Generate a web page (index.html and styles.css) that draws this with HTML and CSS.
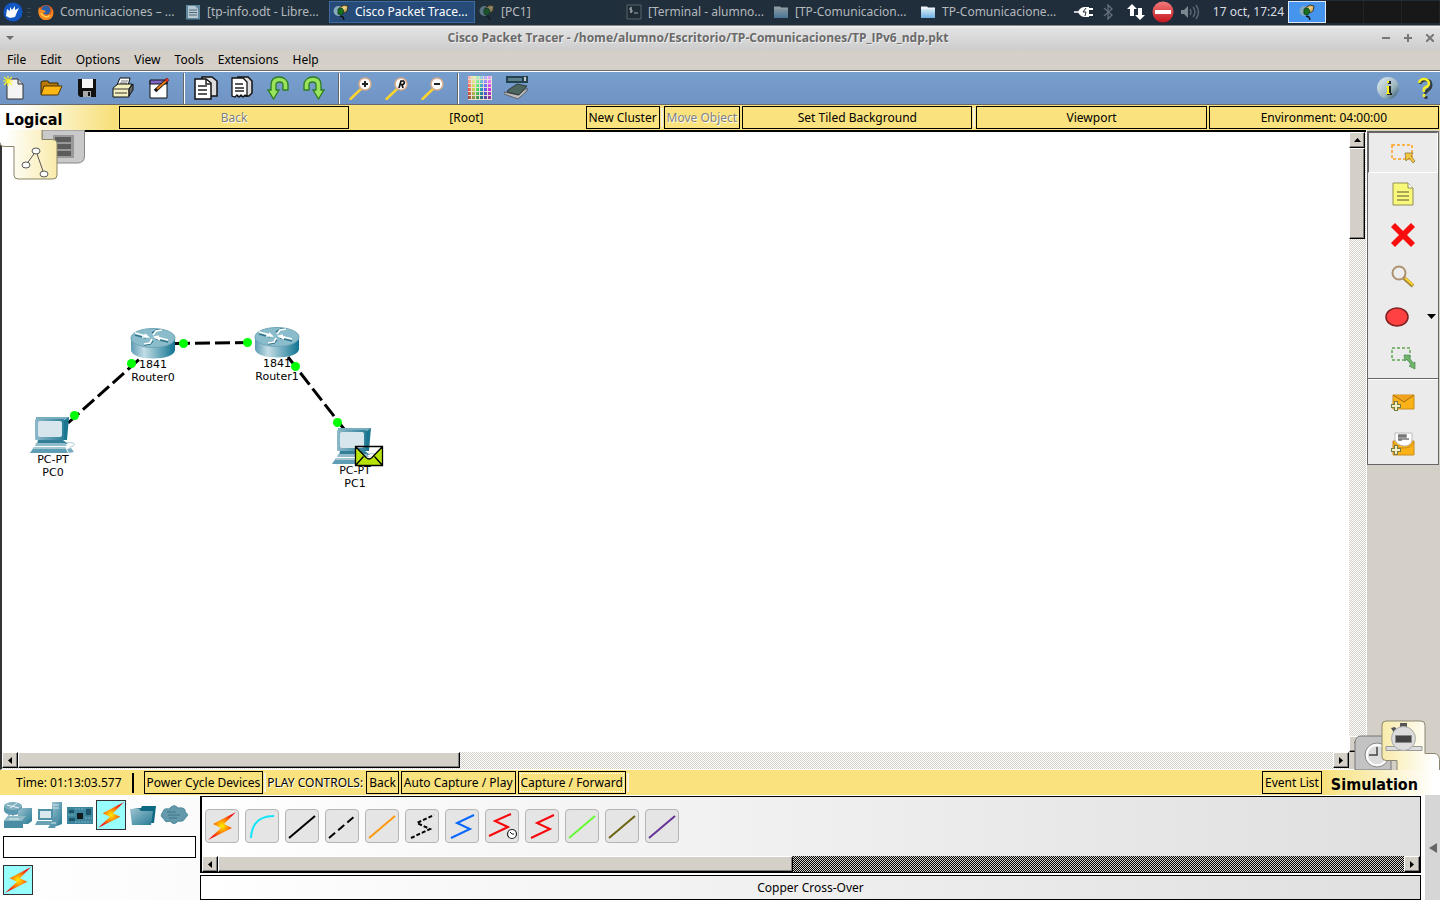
FILE: index.html
```html
<!DOCTYPE html>
<html lang="es">
<head>
<meta charset="utf-8">
<title>Cisco Packet Tracer</title>
<link rel="stylesheet" href="styles.css">
</head>
<body>
<svg class="defs" aria-hidden="true">
  <defs>
    <linearGradient id="gTeal" x1="0" x2="1" y1="0" y2="0"><stop offset="0" stop-color="#5f9cb4"/><stop offset=".3" stop-color="#c3dde6"/><stop offset="1" stop-color="#0f7391"/></linearGradient>
    <linearGradient id="gPc" x1="0" x2="1" y1="0" y2="0"><stop offset="0" stop-color="#8db9c9"/><stop offset="1" stop-color="#2c8099"/></linearGradient>
    <linearGradient id="gDev" x1="0" x2="1" y1="0" y2="1"><stop offset="0" stop-color="#9cc3d0"/><stop offset="1" stop-color="#287b95"/></linearGradient>
    <radialGradient id="gBolt"><stop offset="0" stop-color="#ffee00"/><stop offset=".45" stop-color="#ff8a00"/><stop offset="1" stop-color="#f01010"/></radialGradient>
    <linearGradient id="gRed" x1="0" x2="0" y1="0" y2="1"><stop offset="0" stop-color="#f37a7a"/><stop offset="1" stop-color="#c4161c"/></linearGradient>
    <linearGradient id="gFolder" x1="0" x2="0" y1="0" y2="1"><stop offset="0" stop-color="#d3e9f6"/><stop offset="1" stop-color="#6cafe0"/></linearGradient>
    <linearGradient id="gPale" x1="0" x2="1" y1="0" y2="0"><stop offset=".1" stop-color="#fff"/><stop offset="1" stop-color="#f9ebaa"/></linearGradient>
    <linearGradient id="gPaleR" x1="0" x2="1" y1="0" y2="0"><stop offset="0" stop-color="#f9ebaa"/><stop offset=".9" stop-color="#fff"/></linearGradient>
    <linearGradient id="gInfo" x1="0" x2="1" y1="0" y2="1"><stop offset="0" stop-color="#e6eef2"/><stop offset=".6" stop-color="#9db6c0"/><stop offset="1" stop-color="#28506a"/></linearGradient>
    <symbol id="pt" viewBox="0 0 16 16"><circle cx="5.500" cy="7" r="5" fill="#86aabb"/><path d="M7 12l3 1 1 3" fill="none" stroke="#111" stroke-width="1.500"/><path d="M6 4l5-3 4 1-1 5-3 2z" fill="#d9b566" stroke="#2b2410" stroke-width=".8"/><path d="M7 4l7-1-4 3z" fill="#f1dc9c"/><path d="M5 5l4-1 2 3-2 4-4-1z" fill="#14701f" stroke="#0b3a10" stroke-width=".8"/></symbol>
    <symbol id="folder" viewBox="0 0 16 16"><path d="M1 2.500h6l1 1h7v3H1z" fill="#eef4f8"/><path d="M1 5h14v9H1z" fill="url(#gFolder)"/></symbol>
    <symbol id="bolt" viewBox="0 0 30 30"><path d="M29 1L6 13l8 4L1 29l24-12-8-4z" fill="url(#gBolt)"/></symbol>
    <symbol id="router" viewBox="0 0 46 31"><path d="M1 10v12c0 5 10 8.500 22 8.500S45 27 45 22V10z" fill="url(#gTeal)"/><ellipse cx="23" cy="10" rx="22" ry="9.500" fill="#8bbccb" stroke="#6fa6b8"/><g fill="none" stroke="#2f7389" stroke-width="1.500"><path d="M5 7l11 3M26 11l12 3M22 5l5-3 5 0M14 17l6-1 3-3"/></g><g fill="none" stroke="#fff" stroke-width="1.700"><path d="M5 5l11 3m-1-2l3 3-6 0M26 9l12 3m-9-4l-4 1 5 3M23 7l3-4 6-1M14 16l6-1 2-4"/></g></symbol>
    <symbol id="pc" viewBox="0 0 46 38"><path d="M6 1h33l-2 23H6z" fill="#1b7790"/><path d="M6 1h33l-4 3H6z" fill="#78adbe"/><rect x="5" y="3" width="29" height="21" rx="1" fill="url(#gPc)"/><rect x="8" y="5" width="24" height="16" rx="2" fill="#d7e6ec"/><path d="M8 24h25l5 4H7z" fill="#327f98"/><path d="M6 27h29l2 3H5z" fill="#91bccb"/><path d="M4 31h31l3 6H0z" fill="#5e9db3"/><path d="M4 31h31l1 2H3z" fill="#a4c9d5"/><path d="M37 33l4-1 3 4-5 1z" fill="#79adbf"/><path d="M36 27c6-1 9 0 8 2s-5 1-4 4" fill="none" stroke="#a6c7d2"/></symbol>
    <symbol id="lens" viewBox="0 0 24 24"><path d="M1.500 23L12 13" stroke="#fbd22f" stroke-width="2.500" stroke-linecap="round"/><circle cx="16" cy="8" r="6" fill="#fafafa" stroke="#d9ac8c" stroke-width="1.500"/></symbol>
    <symbol id="uturn" viewBox="0 0 24 24"><path d="M2 14h3V9c0-5 3-8 8-8s9 3 9 8v5h-5V9c0-2-1-3-3.500-3S10 7 10 9v5h3l-5.500 9z" fill="#9be35c" stroke="#2b7d22" stroke-width="1.300"/></symbol>
  </defs>
</svg>

<header class="taskbar">
  <button class="launcher" aria-label="Menu"><svg width="20" height="20" viewBox="0 0 20 20"><circle cx="10" cy="10" r="9.500" fill="#1257c4"/><path d="M4 7l3 2 0-4 2 3 3-4 0 4 4-2-2 4-2 5-5 1-4-2z" fill="#fff"/></svg></button>
  <span class="grip"></span>
  <nav class="tasks">
    <button class="task"><svg width="16" height="16" viewBox="0 0 16 16"><circle cx="8" cy="8.500" r="7.500" fill="#e5601b"/><circle cx="8" cy="6" r="4.500" fill="#2a5fa8"/><path d="M1 3c2 3 2 3 5 3l2 2-3 1 3 3 5-1 1-6c3 6 0 11-6 11S-1 10 1 3z" fill="#f48a22"/><path d="M3 9c2 4 6 5 9 2" stroke="#ffd24a" stroke-width="1.500" fill="none"/></svg><span>Comunicaciones – ...</span></button>
    <button class="task"><svg width="16" height="16" viewBox="0 0 16 16"><path d="M1 1h14v14.500H1z" fill="#5f879e"/><path d="M3 2h7l3 3v9H3z" fill="#b9c7ce"/><path d="M4 6h8M4 8.500h8M4 11h8" stroke="#486b80"/></svg><span>[tp-info.odt - Libre...</span></button>
    <button class="task active"><svg width="16" height="16"><use href="#pt"/></svg><span>Cisco Packet Trace...</span></button>
    <button class="task"><svg class="dim" width="16" height="16"><use href="#pt"/></svg><span>[PC1]</span></button>
    <button class="task"><svg width="16" height="16" viewBox="0 0 16 16"><path d="M1 1h14v14H1z" fill="#202c35" stroke="#56646c"/><path d="M6 4H4v2h2v2H4m1-5v6M8 9h4" stroke="#a0abb2" fill="none"/></svg><span>[Terminal - alumno...</span></button>
    <button class="task"><svg class="dim" width="16" height="16"><use href="#folder"/></svg><span>[TP-Comunicacion...</span></button>
    <button class="task"><svg width="16" height="16"><use href="#folder"/></svg><span>TP-Comunicacione...</span></button>
  </nav>
  <div class="tray">
    <svg width="20" height="16" viewBox="0 0 20 16"><path d="M0 8h5" stroke="#fff" stroke-width="1.500"/><path d="M4 8q2-5 7-5h4v10h-4q-5 0-7-5z" fill="#fff"/><path d="M15 5h4M15 11h4" stroke="#fff" stroke-width="2"/><path d="M12 4L9 8h3l-1 4" stroke="#222e3a" fill="none"/></svg>
    <svg width="20" height="16" viewBox="0 0 20 16"><path d="M4 4l8 7-4 4V1l4 4-8 7" fill="none" stroke="#65717c" stroke-width="1.300"/></svg>
    <svg width="20" height="16" viewBox="0 0 20 16"><path d="M6 0l5 5H8v7H4V5H1zM14 16l-5-5h3V4h4v7h3z" fill="#fff"/></svg>
    <svg width="22" height="22" viewBox="0 0 22 22"><circle cx="11" cy="11" r="10.500" fill="url(#gRed)"/><path d="M3 9h16v4H3z" fill="#fff"/></svg>
    <svg width="20" height="16" viewBox="0 0 20 16"><path d="M1 6h3l4-4v12l-4-4H1z" fill="#7d8790"/><path d="M10 5q2 3 0 6m3-8q4 5 0 10m3-12q5 7 0 14" fill="none" stroke="#596571" stroke-width="1.500"/></svg>
  </div>
  <time class="clock">17 oct, 17:24</time>
  <div class="pager"><span class="desk on"><svg width="16" height="16"><use href="#pt"/></svg></span><span class="desk"></span><span class="desk"></span><span class="desk"></span></div>
</header>

<div class="titlebar">
  <button aria-label="Window menu"><svg width="8" height="5" viewBox="0 0 8 5"><path d="M0 0h8L4 4z" fill="#6e6e6e"/></svg></button>
  <h1>Cisco Packet Tracer - /home/alumno/Escritorio/TP-Comunicaciones/TP_IPv6_ndp.pkt</h1>
  <div class="winbtns">
    <button aria-label="Minimize"><svg width="8" height="8"><path d="M0 4h8" stroke="#777" stroke-width="2"/></svg></button>
    <button aria-label="Maximize"><svg width="8" height="8"><path d="M0 4h8M4 0v8" stroke="#777" stroke-width="2"/></svg></button>
    <button aria-label="Close"><svg width="8" height="8"><path d="M0 0l8 8M8 0L0 8" stroke="#777" stroke-width="2"/></svg></button>
  </div>
</div>

<nav class="menubar"><button>File</button><button>Edit</button><button>Options</button><button>View</button><button>Tools</button><button>Extensions</button><button>Help</button></nav>

<div class="toolbar">
  <div class="group">
    <button aria-label="New"><svg width="24" height="24" viewBox="0 0 24 24"><path d="M4 3h11l5 5v15H4z" fill="#f4f4f4" stroke="#333"/><path d="M15 3v5h5" fill="#ccc" stroke="#333"/><path d="M5 0v10M0 5h10M1 1l8 8M9 1L1 9" stroke="#f8f032" stroke-width="1.200"/></svg></button>
    <button aria-label="Open"><svg width="24" height="24" viewBox="0 0 24 24"><path d="M2 18V6l2-1h5l1 2h9v4" fill="#b97a08" stroke="#3a2a04"/><path d="M2 19l3-9h18l-4 9z" fill="#fcb615" stroke="#4b3606"/></svg></button>
    <button aria-label="Save"><svg width="24" height="24" viewBox="0 0 24 24"><path d="M3 3h18v18H5l-2-2z" fill="#111"/><path d="M7 3h11v9H7z" fill="#f6f6f6"/><path d="M8 15h8v6H8z" fill="#aaa"/><path d="M13 16h2v4h-2z" fill="#111"/></svg></button>
    <button aria-label="Print"><svg width="24" height="24" viewBox="0 0 24 24"><path d="M6 9l3-7h10l-2 8z" fill="#fff" stroke="#111"/><path d="M10 5h7M9 7h7" stroke="#777"/><path d="M2 12l5-4h14l-3 5v8H2z" fill="#f3f0bf" stroke="#111"/><path d="M18 13l4-5v6l-4 6z" fill="#666" stroke="#111"/><path d="M2 13h16M4 17h12" stroke="#333"/></svg></button>
    <button aria-label="Activity wizard"><svg width="24" height="24" viewBox="0 0 24 24"><path d="M3 5h17v17H3z" fill="#fff" stroke="#111"/><path d="M3 4h17v4H3z" fill="#8267c9" stroke="#111"/><path d="M8 15L21 3" stroke="#111" stroke-width="3.500"/><path d="M10 13L19 5" stroke="#e77c16" stroke-width="2"/><path d="M19 5l2-2" stroke="#e32b27" stroke-width="3"/></svg></button>
  </div>
  <span class="sep"></span>
  <div class="group">
    <button aria-label="Copy"><svg width="24" height="24" viewBox="0 0 24 24"><path d="M8 1h10l5 4v15H8z" fill="#ddd" stroke="#111" stroke-width="1.500"/><path d="M1 3h11l5 4v16H1z" fill="#fff" stroke="#111" stroke-width="1.500"/><path d="M12 3v5h5M4 10h9M4 14h9M4 18h9" fill="none" stroke="#222" stroke-width="1.500"/></svg></button>
    <button aria-label="Paste"><svg width="24" height="24" viewBox="0 0 24 24"><path d="M8 1h10l4 4v12l-3 3H8z" fill="#ddd" stroke="#111" stroke-width="1.500"/><path d="M2 2h11l4 4v14l-2-1-2 2-2-2-2 2-2-2-2 2-3-1z" fill="#fff" stroke="#111" stroke-width="1.300"/><path d="M5 8h8M5 12h9M5 15h9" stroke="#222" stroke-width="1.500"/></svg></button>
    <button aria-label="Undo"><svg width="24" height="24"><use href="#uturn"/></svg></button>
    <button aria-label="Redo"><svg class="flip" width="24" height="24"><use href="#uturn"/></svg></button>
  </div>
  <span class="sep"></span>
  <div class="group">
    <button aria-label="Zoom in"><svg width="24" height="24"><use href="#lens"/><path d="M16 5v6M13 8h6" stroke="#222" stroke-width="2"/></svg></button>
    <button aria-label="Zoom reset"><svg width="24" height="24"><use href="#lens"/><path d="M14 12l2-7h2.500q2 2-.5 3.500h-3M17 8.500l1 3.500" fill="none" stroke="#111" stroke-width="1.700"/></svg></button>
    <button aria-label="Zoom out"><svg width="24" height="24"><use href="#lens"/><path d="M13 8h6" stroke="#222" stroke-width="2"/></svg></button>
  </div>
  <span class="sep"></span>
  <div class="group">
    <button aria-label="Drawing palette"><span class="palette"></span></button>
    <button aria-label="Custom devices"><svg width="24" height="24" viewBox="0 0 24 24"><path d="M2 0h22v7H2z" fill="#23414f"/><path d="M4 2h14v3H4z" fill="#5c7f8c"/><path d="M20 1h2v4h-2z" fill="#ccc"/><path d="M0 16l14 3 9-7v3l-9 8-14-5z" fill="#bbb" stroke="#444" stroke-width=".7"/><path d="M4 14l9-6 10 2-8 9-12-3z" fill="#4c655f" stroke="#222" stroke-width=".7"/></svg></button>
  </div>
  <div class="group end">
    <button aria-label="Info"><svg width="24" height="24" viewBox="0 0 24 24"><circle cx="12" cy="12" r="11" fill="url(#gInfo)"/><path d="M12 5h3v3h-3zM11 10h4v7h1v2h-5z" fill="#222"/><path d="M11 5h2v2h-2zM10 10h3v7h1v1h-4v-1h1v-6h-1z" fill="#f6f01d"/></svg></button>
    <button aria-label="Help"><svg width="24" height="24" viewBox="0 0 24 24"><path d="M8 8q1-4 6-4t5 5q0 3-3 5t-2 4M14 20v3" fill="none" stroke="#333c46" stroke-width="3"/><path d="M7 7q1-4 5-4t5 4q0 3-3 4t-2 5M12 18v3" fill="none" stroke="#f5ee28" stroke-width="2.500"/></svg></button>
  </div>
</div>

<div class="navbar">
  <strong class="mode">Logical</strong>
  <button class="box wide" disabled>Back</button>
  <span class="root wide">[Root]</span>
  <button class="box">New Cluster</button>
  <i class="tick"></i>
  <button class="box" disabled>Move Object</button>
  <button class="box wide">Set Tiled Background</button>
  <i class="tick"></i>
  <button class="box wide">Viewport</button>
  <button class="box wide">Environment: 04:00:00</button>
</div>

<main class="work">
  <section class="view">
    <div class="canvas">
      <svg class="layer" aria-hidden="true"><g stroke="#000" stroke-width="3" stroke-dasharray="15 5"><path d="M66 291L141 224"/><path d="M173 211.500L256 210.500"/><path d="M286 225L342 297"/></g></svg>
      <div class="node r0"><svg width="46" height="31"><use href="#router"/></svg><span>1841</span><span>Router0</span></div>
      <div class="node r1"><svg width="46" height="31"><use href="#router"/></svg><span>1841</span><span>Router1</span></div>
      <div class="node p0"><svg width="46" height="38"><use href="#pc"/></svg><span>PC-PT</span><span>PC0</span></div>
      <div class="node p1"><svg width="46" height="38"><use href="#pc"/></svg><span>PC-PT</span><span>PC1</span></div>
      <svg class="layer" aria-hidden="true"><g fill="#0f0"><circle cx="72.500" cy="283.500" r="4.500"/><circle cx="129.500" cy="231.500" r="4.500"/><circle cx="181.500" cy="211.500" r="4.500"/><circle cx="245.500" cy="210.500" r="4.500"/><circle cx="293.500" cy="234.500" r="4.500"/><circle cx="335.500" cy="290.500" r="4.500"/></g><path d="M353.500 314.500h27v19h-27zl10.500 11q3 3 6 0l10.500-11M353.500 333.500l8-9M380.500 333.500l-8-9" fill="#b7e30b" stroke="#000" stroke-width="1.300"/></svg>
    </div>
    <div class="scroll v"><button class="sb" aria-label="Up"><svg width="7" height="4"><path d="M0 4h7L3.500 0z"/></svg></button><span class="thumb tv"></span><button class="sb push" aria-label="Down"><svg width="7" height="4"><path d="M0 0h7L3.500 4z"/></svg></button></div>
    <div class="scroll h"><button class="sb" aria-label="Left"><svg width="4" height="7"><path d="M4 0v7L0 3.500z"/></svg></button><span class="thumb th"></span><button class="sb push" aria-label="Right"><svg width="4" height="7"><path d="M0 0v7l4-3.500z"/></svg></button></div>
    <span class="corner"></span>
  </section>
  <aside class="side">
    <div class="tools">
      <button class="pressed" aria-label="Select"><svg width="26" height="24" viewBox="0 0 26 24"><path d="M2 4h20v14H2z" fill="none" stroke="#ffa01e" stroke-width="1.500" stroke-dasharray="3 2"/><path d="M15 12l8 0-2 3 4 5-2 2-4-5-3 3z" fill="#f3c83c" stroke="#8c7a42" stroke-width=".8"/></svg></button>
      <button aria-label="Place note"><svg width="24" height="26" viewBox="0 0 24 26"><path d="M2 2h15l5 5v17H2z" fill="#faf87a" stroke="#908f55"/><path d="M17 2v5h5" fill="#fff" stroke="#908f55"/><path d="M6 11h12M6 15h12M6 19h12" stroke="#8d8b4b" stroke-width="1.500"/></svg></button>
      <button aria-label="Delete"><svg width="24" height="24" viewBox="0 0 24 24"><path d="M0 4l4-4 8 8 8-8 4 4-8 8 8 8-4 4-8-8-8 8-4-4 8-8z" fill="#f80d0d"/></svg></button>
      <button aria-label="Inspect"><svg width="26" height="24" viewBox="0 0 26 24"><circle cx="9" cy="9" r="6.500" fill="#eee" stroke="#ad9272" stroke-width="2"/><path d="M14 14l9 8" stroke="#a18640" stroke-width="4"/><path d="M15 14l8 7" stroke="#ffd12c" stroke-width="2"/></svg></button>
      <button class="shape" aria-label="Draw shape"><svg width="24" height="20" viewBox="0 0 24 20"><ellipse cx="12" cy="10" rx="11" ry="9" fill="#ff4141" stroke="#7d2020" stroke-width="1.500"/></svg><svg width="9" height="5"><path d="M0 0h9L4.500 5z"/></svg></button>
      <button aria-label="Resize"><svg width="26" height="24" viewBox="0 0 26 24"><path d="M2 2h18v12H2z" fill="none" stroke="#5fa852" stroke-width="1.500" stroke-dasharray="3 2"/><path d="M14 9h6l-1 2 4 6 2-1v7l-6-3 2-1-4-6-2 2z" fill="#6eb56b" stroke="#4c8b51" stroke-width=".7"/></svg></button>
      <hr>
      <button aria-label="Add simple PDU"><svg width="26" height="22" viewBox="0 0 26 22"><path d="M3 3h21v14H3z" fill="#fbb217" stroke="#c98c1c"/><path d="M3 3l11 7L24 3" fill="#f0a21d" stroke="#a56d15"/><path d="M6 9v10M1 14h10" stroke="#757b42" stroke-width="4"/><path d="M6 10v8M2 14h8" stroke="#f2efc5" stroke-width="2"/></svg></button>
      <button aria-label="Add complex PDU"><svg width="26" height="26" viewBox="0 0 26 26"><path d="M3 10h21v14H3z" fill="#fbb217" stroke="#c98c1c"/><path d="M5 2h17v8q-2 5-8 5-7-1-9-6z" fill="#fff" stroke="#bbb"/><path d="M8 4h8v2H8m0 2h11M8 9h4" stroke="#777" stroke-width="1.500" fill="#777"/><path d="M3 11q5 7 11 6 7 0 10-6" fill="none" stroke="#c98c1c"/><path d="M6 14v10M1 19h10" stroke="#757b42" stroke-width="4"/><path d="M6 15v8M2 19h8" stroke="#f2efc5" stroke-width="2"/></svg></button>
    </div>
  </aside>
  <svg class="tab left" width="86" height="51" viewBox="0 0 86 51"><path d="M42 0h42.500v26q0 7-7 7H42z" fill="#c9c9c9" stroke="#868686"/><path d="M53 5h21v23H53z" fill="#999"/><path d="M55 7h16v5H55zM55 14h16v5H55zM55 21h16v5H55z" fill="#5c5c5c"/><path d="M0 0h42v9.500h11q4 0 4 4V45q0 4-4 4H18q-4 0-4-4V16.500H4q-4 0-4-4z" fill="url(#gPale)"/><path d="M42 0v9.500h11q4 0 4 4V45q0 4-4 4H18q-4 0-4-4V16.500H4q-4 0-4-4" fill="none" stroke="#8b8566"/><g stroke="#555" fill="#fff"><path d="M36 21L26 35M36 21l8 23" fill="none"/><ellipse cx="36" cy="21" rx="4" ry="3"/><ellipse cx="26" cy="35" rx="4" ry="3"/><ellipse cx="44" cy="44" rx="4" ry="3"/></g></svg>
  <svg class="tab right" width="86" height="50" viewBox="0 0 86 50"><path d="M1 50V22q1-6 6-6h30v34z" fill="#c3c3c3" stroke="#777"/><circle cx="23" cy="35" r="12" fill="#f1f1f1" stroke="#888"/><circle cx="23" cy="35" r="10" fill="#ddd" stroke="#fff" stroke-width="1.500"/><path d="M23 27v8h-8" fill="none" stroke="#444" stroke-width="1.500"/><path d="M28 5q0-4 4-4h35q4 0 4 4v28.500h9q5 0 5.500 6V50H43v-9.500H32q-4 0-4-4z" fill="url(#gPaleR)"/><path d="M43 50v-9.500H32q-4 0-4-4V5q0-4 4-4h35q4 0 4 4v28.500h9q5 0 5.500 6V50" fill="none" stroke="#8b8770"/><path d="M32 26.500h36v4H32z" fill="#ddd" stroke="#999"/><path d="M46 3h7v4h-7zM37 8l4-1 2 3-3 3z" fill="#555"/><circle cx="49.500" cy="18.500" r="12" fill="#dcdcdc" stroke="#aaa"/><path d="M41.500 15.500h16v7h-16z" fill="#444" stroke="#888"/></svg>
</main>

<div class="simbar">
  <span class="simtime">Time: 01:13:03.577</span>
  <i class="bar"></i>
  <button class="box">Power Cycle Devices</button>
  <i class="tick"></i>
  <span class="ctl">PLAY CONTROLS:</span>
  <button class="box">Back</button>
  <button class="box">Auto Capture / Play</button>
  <button class="box focus">Capture / Forward</button>
  <i class="tick"></i>
  <button class="box event">Event List</button>
  <strong class="mode sim">Simulation</strong>
</div>

<footer class="bottom">
  <section class="devices">
    <div class="types">
      <button aria-label="Network devices"><svg width="28" height="28" viewBox="0 0 28 28"><path d="M0 5v5q2 4 9 4t9-4V5z" fill="#5b98ae"/><ellipse cx="9" cy="5" rx="9" ry="4" fill="#7eb0c0"/><path d="M3 4l12 3M13 2L6 7" stroke="#e8f3f6"/><path d="M14 10l4-3h10v13l-4 3H14z" fill="url(#gDev)"/><path d="M5 13v5M9 12v6" stroke="#4f91a7"/><path d="M0 20l4-5h18l-3 6v6H0z" fill="#4a8da5"/><path d="M0 20l4-5h18l-4 5z" fill="#8ebac8"/><path d="M5 18h10" stroke="#e4f0f4"/></svg></button>
      <button aria-label="End devices"><svg width="28" height="28" viewBox="0 0 28 28"><path d="M17 1h10v22l-5 2h-5z" fill="url(#gDev)"/><path d="M18 4h6M18 7h6" stroke="#d1e4ea"/><path d="M3 8h15v11H3z" fill="#4f91a7"/><path d="M5 10h11v7H5z" fill="#dbe9ee"/><path d="M2 20h16l2 4H0z" fill="#69a2b5"/><path d="M20 15h5l-5 12h-7z" fill="#5b98ae"/><path d="M16 22h5" stroke="#d5e7ed"/></svg></button>
      <button aria-label="Components"><svg width="28" height="28" viewBox="0 0 28 28"><path d="M1 6h26v17H1z" fill="#3c859d"/><path d="M3 9h5v3H3zM3 17h6v3H3zM20 8h5v6h-5z" fill="#1d5468"/><path d="M11 12h6v6h-6z" fill="#11191d"/><path d="M9 8h10M9 21h16M19 17h7M2 14h7" stroke="#7fb0c0" stroke-dasharray="2 1"/></svg></button>
      <button class="sel" aria-label="Connections"><svg width="28" height="28"><use href="#bolt"/></svg></button>
      <button aria-label="Miscellaneous"><svg width="28" height="28" viewBox="0 0 28 28"><path d="M3 8l9-1 1-2h14l-2 17H5z" fill="#0d6882"/><path d="M1 8h9l2 2h12l-2 14H3z" fill="url(#gDev)"/></svg></button>
      <button aria-label="Multiuser"><svg width="28" height="28" viewBox="0 0 28 28"><path d="M4 18q-5-3-1-7 0-4 6-3 5-6 9-1 8-1 7 4 5 3 0 6-1 4-7 3-4 5-8 0-5 2-6-2z" fill="#6499ab" stroke="#4a879c"/><path d="M7 11h9M8 14h12M9 17h8" stroke="#3d7489"/></svg></button>
    </div>
    <input class="search" type="text" aria-label="Device name">
    <button class="sel" aria-label="Connections"><svg width="28" height="28"><use href="#bolt"/></svg></button>
  </section>
  <section class="cables">
    <div class="panel">
      <div class="tiles">
        <button class="tile" aria-label="Automatic"><svg width="30" height="30"><use href="#bolt"/></svg></button>
        <button class="tile" aria-label="Console"><svg width="30" height="30"><path d="M4 27Q5 5 27 5" stroke="#12e5fa"/></svg></button>
        <button class="tile" aria-label="Copper straight-through"><svg width="30" height="30"><path d="M2 27L28 5" stroke="#000"/></svg></button>
        <button class="tile" aria-label="Copper cross-over"><svg width="30" height="30"><path d="M2 27L28 5" stroke="#000" stroke-dasharray="8 4"/></svg></button>
        <button class="tile" aria-label="Fiber"><svg width="30" height="30"><path d="M2 27L28 5" stroke="#ff980f"/></svg></button>
        <button class="tile" aria-label="Phone"><svg width="30" height="30"><path d="M4 27l19-9-13-6L27 4" stroke="#000" stroke-dasharray="4 2"/></svg></button>
        <button class="tile" aria-label="Coaxial"><svg width="30" height="30"><path d="M4 27l19-9-13-6L27 4" stroke="#0869ff"/></svg></button>
        <button class="tile" aria-label="Serial DCE"><svg width="30" height="30"><path d="M2 25l19-9-13-6L24 3" stroke="#f8080c"/><circle cx="25" cy="23" r="4.500" fill="#fff" stroke="#222" stroke-width="1.200"/><path class="hand" d="M27 23h-2l-2-2" stroke="#222"/></svg></button>
        <button class="tile" aria-label="Serial DTE"><svg width="30" height="30"><path d="M4 27l19-9-13-6L27 4" stroke="#f8080c"/></svg></button>
        <button class="tile" aria-label="Octal"><svg width="30" height="30"><path d="M2 27L28 5" stroke="#66fb32"/></svg></button>
        <button class="tile" aria-label="IoE custom cable"><svg width="30" height="30"><path d="M2 27L28 5" stroke="#6b6311"/></svg></button>
        <button class="tile" aria-label="USB"><svg width="30" height="30"><path d="M2 27L28 5" stroke="#663296"/></svg></button>
      </div>
      <div class="scroll h dark"><button class="sb" aria-label="Left"><svg width="4" height="7"><path d="M4 0v7L0 3.500z"/></svg></button><span class="thumb tc"></span><button class="sb push" aria-label="Right"><svg width="4" height="7"><path d="M0 0v7l4-3.500z"/></svg></button></div>
    </div>
    <div class="status">Copper Cross-Over</div>
  </section>
  <button class="expand" aria-label="Expand"><svg width="8" height="10"><path d="M8 0v10L0 5z" fill="#666"/></svg></button>
</footer>
</body>
</html>
```
FILE: styles.css
```css
* { box-sizing: border-box; }
body {
  margin: 0;
  min-height: 100vh;
  display: flex;
  flex-direction: column;
  background: #fff;
  color: #000;
  font: 12px/16px "Noto Sans", sans-serif;
}
button, input { font: inherit; color: inherit; }
button { padding: 0; border: 0; background: none; }
svg { display: block; flex: none; }
.defs { position: absolute; width: 0; height: 0; }
.dim { opacity: .55; }
.flip { transform: scaleX(-1); }

/* desktop panel */
.taskbar {
  height: 25px;
  display: flex;
  align-items: center;
  padding-bottom: 1px;
  background: linear-gradient(90deg, #21323e, #202b3a);
  color: #b4b9bd;
}
.launcher { margin-left: 3px; }
.grip { width: 4px; height: 9px; margin: 0 4px; background: repeating-linear-gradient(#3b4a56 0 1px, transparent 1px 4px); }
.tasks { flex: 1; display: grid; grid-template-columns: repeat(7, 146px); column-gap: 1px; }
.task {
  height: 22px;
  display: flex;
  align-items: center;
  gap: 6px;
  padding-left: 3px;
  text-align: left;
  white-space: nowrap;
}
.task.active { border: 1px solid #3d6ca4; background: #274b78; color: #fff; }
.tray { display: flex; align-items: center; gap: 6px; }
.clock { margin: 0 4px 0 13px; color: #d8dde0; white-space: nowrap; }
.pager { height: 22px; display: grid; grid-template-columns: repeat(4, 38px); background: #181818; }
.desk { border-right: 1px solid #242424; display: grid; place-items: center; }
.desk.on { background: #4595ee; border: 1px solid #dfe9f4; }

/* window frame */
.titlebar {
  height: 25px;
  display: flex;
  align-items: center;
  padding: 0 6px;
  border-top: 1px solid #888;
  background: linear-gradient(#f4f4f4, #e2e2e2 10%, #cdcdcd);
}
.titlebar h1 { flex: 1; margin: 0; text-align: center; font: bold 12px/16px "Open Sans", "Noto Sans", sans-serif; color: #6a6a6a; text-shadow: 1px 1px #eee; }
.winbtns { display: flex; gap: 14px; }
.menubar { height: 21px; display: flex; align-items: center; gap: 14px; padding: 0 7px 1px; background: #d4d0c8; border-bottom: 1px solid #6d6d6d; }
.toolbar {
  height: 34px;
  display: flex;
  align-items: center;
  padding: 0 4px 0 3px;
  border-top: 1px solid #fff;
  border-bottom: 1px solid #696969;
  background: linear-gradient(#779fce, #7094c4);
}
.group { display: flex; gap: 12px; }
.group.end { margin-left: auto; }
.sep { width: 2px; height: 31px; margin: 0 9px 0 12px; background: #fff; border-left: 1px solid #666; }
.palette {
  display: block;
  width: 24px;
  height: 24px;
  background:
    repeating-linear-gradient(90deg, transparent 0 3px, #e9dfd2 3px 4px),
    repeating-linear-gradient(transparent 0 3px, #e9dfd2 3px 4px),
    linear-gradient(#fff9, transparent 50%, #3338),
    linear-gradient(90deg, #f44, #ce5 25%, #2d6 45%, #36f 65%, #d3e 90%);
}

/* yellow bars */
.navbar, .simbar { display: flex; align-items: center; height: 25px; background: #fae37e; white-space: nowrap; }
.navbar { gap: 2px; padding-right: 1px; }
.box { height: 23px; padding: 0 2px; border: 1px solid #000; background: #fae37e; }
.box:disabled { color: #808080; text-shadow: 1px 1px #fff; }
.wide { flex: 1 1 0; text-align: center; }
.root { margin-right: 2px; padding: 0 3px; }
.mode { align-self: stretch; font: bold 16px/30px "DejaVu Sans Condensed", "DejaVu Sans", sans-serif; }
.navbar .mode { width: 117px; padding-left: 5px; background: linear-gradient(90deg, #fff 15%, #f7e07a 97%); }
.tick { width: 2px; height: 19px; background: #f3f0e4; }
.navbar .tick { margin: 0 -1px; }

/* workspace */
.work { position: relative; flex: 1; display: flex; background: #d4d0c8; min-height: 400px; }
.view {
  flex: 1;
  display: grid;
  grid-template: 1fr 17px / 1fr 17px;
  border-top: 2px solid #000;
  border-left: 2px solid #333;
  border-bottom: 1px solid #fff;
}
.canvas { position: relative; overflow: hidden; background: #fff; font: 11px/13px "DejaVu Sans", sans-serif; }
.layer { position: absolute; inset: 0; width: 100%; height: 100%; }
.node { position: absolute; display: flex; flex-direction: column; align-items: center; width: 60px; }
.node svg { margin-bottom: -1px; }
.r0 { left: 121px; top: 196px; }
.r1 { left: 245px; top: 195px; }
.p0 { left: 21px; top: 284px; }
.p1 { left: 323px; top: 295px; }

.scroll { display: flex; background: repeating-conic-gradient(#fff 0 25%, #d4d0c8 0 50%) 0 0 / 2px 2px; }
.scroll.v { flex-direction: column; }
.dark { background: repeating-conic-gradient(#000 0 25%, #d4d0c8 0 50%) 0 0 / 2px 2px; }
.sb, .thumb { background: #d4d0c8; border: 1px solid; border-color: #fff #000 #000 #fff; box-shadow: inset -1px -1px #808080; }
.sb { flex: none; width: 16px; height: 16px; display: grid; place-items: center; }
.push { margin-left: auto; }
.v .push { margin: auto 0 0; }
.tv { width: 16px; height: 91px; }
.th { width: 442px; height: 16px; }
.tc { width: 575px; height: 16px; }
.corner { background: #d4d0c8; }

.side { width: 74px; padding: 1px 1px 0 0; border-left: 1px solid #fff; }
.tools { display: flex; flex-direction: column; background: #ebebeb; border: 1px solid #666; }
.tools button { height: 41px; display: grid; place-items: center; }
.tools .pressed { border: 1px solid #fff; border-top-color: #666; border-left-color: #666; }
.tools .shape { display: flex; align-items: center; justify-content: flex-end; gap: 18px; padding-right: 2px; }
.tools hr { width: 100%; margin: 0 0 2px; border: 0; border-top: 1px solid #666; border-bottom: 1px solid #fff; }
.tab { position: absolute; }
.tab.left { left: 0; top: 0; }
.tab.right { right: 0; bottom: 0; }

/* simulation bar */
.simtime { margin-left: 16px; }
.bar { width: 2px; height: 20px; margin: 0 10px; background: #000; }
.simbar .tick { margin: 0 1px; }
.ctl { margin-right: 3px; text-shadow: 1px 1px #fff; }
.simbar .box + .box { margin-left: 2px; }
.focus { outline: 1px dotted #fff; outline-offset: -3px; }
.simbar .event { margin-left: auto; }
.sim { padding: 0 22px 0 9px; background: linear-gradient(90deg, #f7e07a, #fff 95%); }

/* device palette */
.bottom { display: grid; grid-template-columns: 200px 1fr 15px; height: 105px; }
.devices { padding: 5px 4px 0 3px; display: flex; flex-direction: column; align-items: flex-start; background: linear-gradient(90deg, #fff, #fbfbfb); }
.types { display: flex; align-items: center; gap: 2px; }
.types button { width: 29px; height: 30px; display: grid; place-items: center; }
.sel, .types .sel { width: 30px; height: 30px; border: 1px solid #333; background: #97fdfd; }
.search { width: 100%; height: 22px; margin: 6px 0 7px; padding: 0 3px; border: 1px solid #000; background: #fff; }
.cables { display: flex; flex-direction: column; gap: 2px; padding: 1px 4px 0 0; }
.panel, .status { border: 1px solid #000; background: linear-gradient(90deg, #fff, #dfdfdf); }
.panel { flex: 1; display: flex; flex-direction: column; justify-content: space-between; border-left-width: 2px; }
.tiles { display: flex; gap: 6px; padding: 12px 0 0 3px; }
.tile { width: 34px; height: 34px; display: grid; place-items: center; border: 1px solid #b5b5b5; border-radius: 4px; background: #e5e5e5; }
.tile path { fill: none; stroke-width: 2; }
.tile .hand { stroke-width: 1; }
.status { height: 25px; line-height: 23px; text-align: center; }
.expand { display: grid; place-items: center; background: #d6d6d6; }
```
